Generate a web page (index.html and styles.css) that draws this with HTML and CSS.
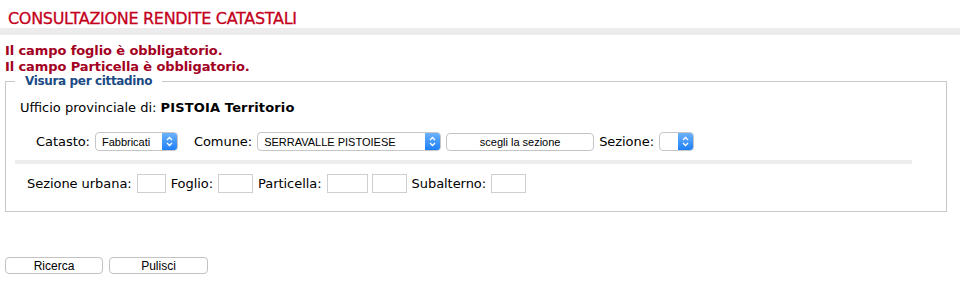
FILE: index.html
```html
<!DOCTYPE html>
<html lang="it">
<head>
    <meta charset="UTF-8">
    <title>Consultazione rendite catastali</title>
    <link rel="stylesheet" href="styles.css">
</head>
<body>

    <h1 class="page-title">CONSULTAZIONE RENDITE CATASTALI</h1>
    <div class="title-bar"></div>

    <div class="content">
        <div class="errors">
            <div>Il campo foglio è obbligatorio.</div>
            <div>Il campo Particella è obbligatorio.</div>
        </div>

        <fieldset class="box">
            <legend>Visura per cittadino</legend>

            <div class="row-office">
                Ufficio provinciale di: <b>PISTOIA Territorio</b>
            </div>

            <div class="row-form row-catasto">
                <label for="catasto">Catasto:</label>
                <span class="sel sel-catasto">
                    <select id="catasto">
                        <option>Fabbricati</option>
                        <option>Terreni</option>
                    </select>
                    <span class="arrow"><svg width="7" height="11" viewBox="0 0 7 11"><path d="M1 4 L3.5 1.5 L6 4 M1 7 L3.5 9.5 L6 7" fill="none" stroke="#fff" stroke-width="1.3"/></svg></span>
                </span>

                <label for="comune">Comune:</label>
                <span class="sel sel-comune">
                    <select id="comune">
                        <option>SERRAVALLE PISTOIESE</option>
                    </select>
                    <span class="arrow"><svg width="7" height="11" viewBox="0 0 7 11"><path d="M1 4 L3.5 1.5 L6 4 M1 7 L3.5 9.5 L6 7" fill="none" stroke="#fff" stroke-width="1.3"/></svg></span>
                </span>

                <button class="btn btn-sezione" type="button">scegli la sezione</button>

                <label for="sezione">Sezione:</label>
                <span class="sel sel-sezione">
                    <select id="sezione">
                        <option></option>
                    </select>
                    <span class="arrow"><svg width="7" height="11" viewBox="0 0 7 11"><path d="M1 4 L3.5 1.5 L6 4 M1 7 L3.5 9.5 L6 7" fill="none" stroke="#fff" stroke-width="1.3"/></svg></span>
                </span>
            </div>

            <div class="separator"></div>

            <div class="row-form row-dati">
                <label for="sez-urbana">Sezione urbana:</label>
                <input type="text" id="sez-urbana" class="in-small">
                <label for="foglio">Foglio:</label>
                <input type="text" id="foglio" class="in-mid">
                <label for="particella">Particella:</label>
                <input type="text" id="particella" class="in-wide in-pair">
                <input type="text" id="particella2" class="in-mid">
                <label for="subalterno">Subalterno:</label>
                <input type="text" id="subalterno" class="in-mid">
            </div>
        </fieldset>

        <div class="actions">
            <button class="btn btn-action" type="button">Ricerca</button>
            <button class="btn btn-action" type="button">Pulisci</button>
        </div>
    </div>

</body>
</html>
```

FILE: styles.css
```css
body {
    margin: 0;
    font-family: "DejaVu Sans", Verdana, sans-serif;
    font-size: 13px;
    color: #000;
    background: #fff;
}
.page-title {
    margin: 0;
    padding: 10px 0 0 8px;
    font-size: 16px;
    font-weight: normal;
    line-height: 18px;
    letter-spacing: -0.3px;
    color: #c4001b;
    -webkit-text-stroke: 0.3px #c4001b;
}
.title-bar {
    width: 960px;
    height: 7px;
    background: #ececec;
}
.content {
    padding-left: 5px;
}
.errors {
    margin-top: 8px;
    font-weight: bold;
    line-height: 16px;
    letter-spacing: -0.1px;
    color: #a3001f;
}
.box {
    box-sizing: border-box;
    width: 942px;
    margin: 0;
    padding: 0 9px 18px 9px;
    border: 1px solid #c8c8c8;
}
.box legend {
    padding: 0 10px;
    font-size: 12px;
    font-weight: bold;
    line-height: 13px;
    letter-spacing: -0.35px;
    color: #1b4a85;
}
.row-office {
    margin: 12px 0 0 5px;
    line-height: 16px;
}
.row-office b {
    letter-spacing: 0.15px;
}
.row-form {
    display: flex;
    align-items: center;
    letter-spacing: -0.05px;
}
.row-catasto {
    margin: 16px 0 0 21px;
}
.row-dati {
    margin: 10px 0 0 12px;
}
.row-form label {
    margin-right: 5px;
}
.sel {
    position: relative;
    display: inline-block;
    height: 19px;
}
.sel select {
    -webkit-appearance: none;
    appearance: none;
    box-sizing: border-box;
    width: 100%;
    height: 19px;
    margin: 0;
    padding: 0 18px 0 6px;
    border: 1px solid #c6c6c6;
    border-radius: 4px;
    background: #fff;
    font-family: "Liberation Sans", Arial, sans-serif;
    font-size: 11px;
    letter-spacing: 0;
    color: #000;
}
.sel .arrow {
    position: absolute;
    top: 1px;
    right: 1px;
    bottom: 1px;
    width: 15px;
    display: flex;
    align-items: center;
    justify-content: center;
    border-radius: 0 3px 3px 0;
    background: linear-gradient(#6cb2fb, #1e7ff6);
    pointer-events: none;
}
.sel-catasto {
    width: 83px;
    margin-right: 16px;
}
.sel-comune {
    width: 184px;
    margin-right: 5px;
}
.sel-sezione {
    width: 35px;
}
.btn {
    box-sizing: border-box;
    margin: 0;
    padding: 0;
    border: 1px solid #c4c4c4;
    border-radius: 4px;
    background: #fff;
    font-family: "Liberation Sans", Arial, sans-serif;
    font-size: 11px;
    letter-spacing: 0;
    color: #000;
    cursor: pointer;
}
.btn-sezione {
    width: 148px;
    height: 18px;
    margin-right: 5px;
}
.separator {
    width: 897px;
    height: 4px;
    margin-top: 9px;
    background: #ececec;
}
.row-dati input {
    box-sizing: border-box;
    height: 19px;
    margin: 0 5px 0 0;
    padding: 0 2px;
    border: 1px solid #cfcfcf;
    font-size: 12px;
}
.row-dati .in-pair {
    margin-right: 4px;
}
.in-small { width: 29px; }
.in-mid { width: 35px; }
.in-wide { width: 41px; }
.actions {
    display: flex;
    gap: 6px;
    margin-top: 45px;
}
.btn-action {
    width: 98px;
    height: 17px;
    font-size: 12px;
    border-color: #c2c2c2;
}
.btn-action + .btn-action {
    width: 99px;
}
```
